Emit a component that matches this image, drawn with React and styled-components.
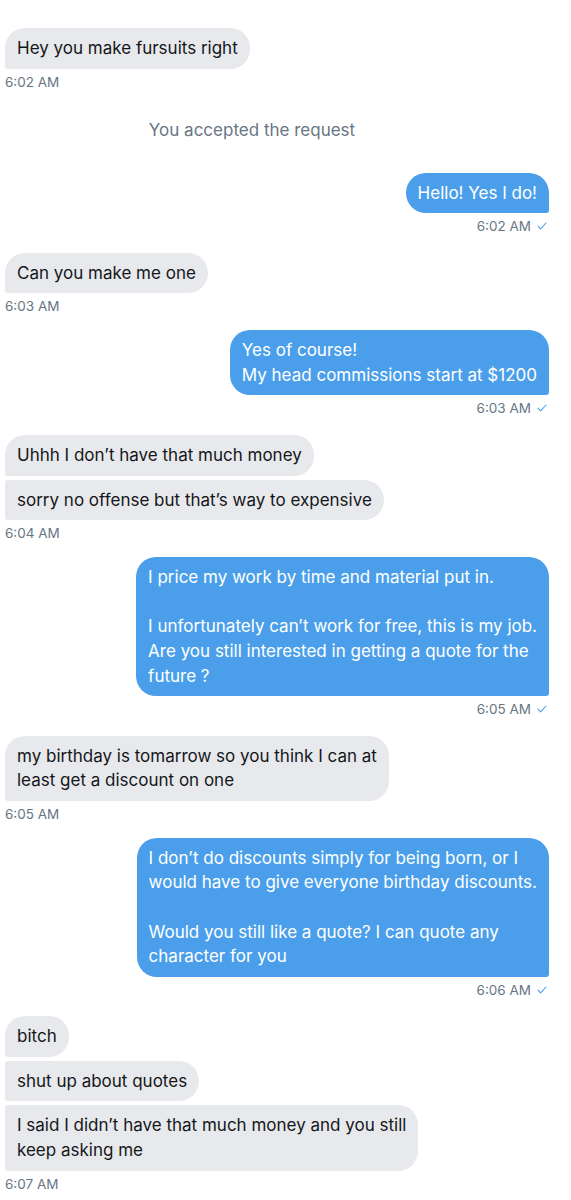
import styled, { createGlobalStyle } from "styled-components";

const GlobalStyle = createGlobalStyle`
  html, body {
    margin: 0;
    padding: 0;
    background: #ffffff;
  }
  body {
    font-family: Inter, "Liberation Sans", Arial, sans-serif;
    -webkit-font-smoothing: antialiased;
  }
`;

const Thread = styled.div`
  display: flex;
  flex-direction: column;
  padding: 28px 22px 4px 5px;
`;

const Group = styled.div`
  display: flex;
  flex-direction: column;
  align-items: ${(props) => (props.sent ? "flex-end" : "flex-start")};
  gap: 4px;
  margin-bottom: ${(props) => (props.sent ? "17.5px" : "15px")};
`;

const Bubble = styled.div`
  white-space: pre;
  font-size: 17px;
  line-height: 24.6px;
  padding: 8px 12px;
  color: ${(props) => (props.sent ? "#ffffff" : "#14171a")};
  background: ${(props) => (props.sent ? "#4b9fea" : "#e8e9ec")};
  border-radius: 20px;
  ${(props) =>
    props.sent
      ? "border-bottom-right-radius: 3px;"
      : `
    border-bottom-left-radius: 3px;
    ${props.cont ? "border-top-left-radius: 3px;" : ""}
  `}
`;

const Stamp = styled.div`
  display: flex;
  align-items: center;
  gap: 6px;
  font-size: 13.5px;
  line-height: 18px;
  color: #687684;
  padding-right: ${(props) => (props.sent ? "2px" : "0")};
`;

const Notice = styled.div`
  text-align: center;
  font-size: 17px;
  line-height: 24px;
  color: #687684;
  padding-right: 50px;
  margin: 12px 0 31px 0;
`;

const Check = () => (
  <svg width="10" height="8" viewBox="0 0 10 8">
    <polyline
      points="1,4.2 3.6,6.8 9,1"
      fill="none"
      stroke="#4b9fea"
      strokeWidth="1.1"
      strokeLinecap="round"
      strokeLinejoin="round"
    />
  </svg>
);

const messages = [
  { sent: false, time: "6:02 AM", lines: ["Hey you make fursuits right"] },
  { notice: "You accepted the request" },
  { sent: true, time: "6:02 AM", lines: ["Hello! Yes I do!"] },
  { sent: false, time: "6:03 AM", lines: ["Can you make me one"] },
  {
    sent: true,
    time: "6:03 AM",
    lines: ["Yes of course!\nMy head commissions start at $1200"],
  },
  {
    sent: false,
    time: "6:04 AM",
    lines: [
      "Uhhh I don\u2019t have that much money",
      "sorry no offense but that\u2019s way to expensive",
    ],
  },
  {
    sent: true,
    time: "6:05 AM",
    lines: [
      "I price my work by time and material put in.\n\nI unfortunately can\u2019t work for free, this is my job.\nAre you still interested in getting a quote for the\nfuture ?",
    ],
  },
  {
    sent: false,
    time: "6:05 AM",
    lines: [
      "my birthday is tomarrow so you think I can at\nleast get a discount on one",
    ],
  },
  {
    sent: true,
    time: "6:06 AM",
    lines: [
      "I don\u2019t do discounts simply for being born, or I\nwould have to give everyone birthday discounts.\n\nWould you still like a quote? I can quote any\ncharacter for you",
    ],
  },
  {
    sent: false,
    time: "6:07 AM",
    lines: [
      "bitch",
      "shut up about quotes",
      "I said I didn\u2019t have that much money and you still\nkeep asking me",
    ],
  },
];

const App = () => {
  return (
    <>
      <GlobalStyle />
      <Thread>
        {messages.map((m, i) =>
          m.notice ? (
            <Notice key={i}>{m.notice}</Notice>
          ) : (
            <Group key={i} sent={m.sent}>
              {m.lines.map((text, j) => (
                <Bubble key={j} sent={m.sent} cont={j > 0}>
                  {text}
                </Bubble>
              ))}
              <Stamp sent={m.sent}>
                {m.time}
                {m.sent && <Check />}
              </Stamp>
            </Group>
          )
        )}
      </Thread>
    </>
  );
};

export default App;
